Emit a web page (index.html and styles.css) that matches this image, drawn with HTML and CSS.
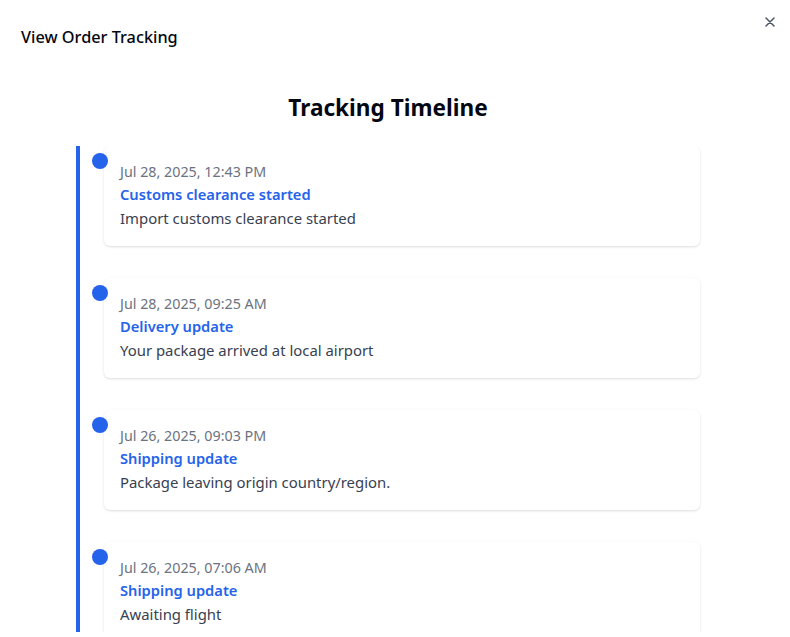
FILE: index.html
```html
<!DOCTYPE html>
<html lang="en">
<head>
  <meta charset="UTF-8">
  <title>View Order Tracking</title>
  <link rel="stylesheet" href="styles.css">
</head>
<body>
  <div class="modal">
    <div class="modal-header">
      <h3>View Order Tracking</h3>
    </div>
    <button class="close-btn" aria-label="Close">
      <svg width="10" height="10" viewBox="0 0 10 10">
        <path d="M1 1L9 9M9 1L1 9" stroke="#4b5563" stroke-width="1.5" stroke-linecap="round"/>
      </svg>
    </button>

    <h2 class="timeline-title">Tracking Timeline</h2>

    <div class="timeline-wrap">
      <div class="timeline">
        <div class="event">
          <span class="dot"></span>
          <div class="card">
            <div class="date">Jul 28, 2025, 12:43 PM</div>
            <div class="status">Customs clearance started</div>
            <div class="desc">Import customs clearance started</div>
          </div>
        </div>
        <div class="event">
          <span class="dot"></span>
          <div class="card">
            <div class="date">Jul 28, 2025, 09:25 AM</div>
            <div class="status">Delivery update</div>
            <div class="desc">Your package arrived at local airport</div>
          </div>
        </div>
        <div class="event">
          <span class="dot"></span>
          <div class="card">
            <div class="date">Jul 26, 2025, 09:03 PM</div>
            <div class="status">Shipping update</div>
            <div class="desc">Package leaving origin country/region.</div>
          </div>
        </div>
        <div class="event">
          <span class="dot"></span>
          <div class="card">
            <div class="date">Jul 26, 2025, 07:06 AM</div>
            <div class="status">Shipping update</div>
            <div class="desc">Awaiting flight</div>
          </div>
        </div>
      </div>
    </div>
  </div>
</body>
</html>
```

FILE: styles.css
```css
body {
  margin: 0;
  font-family: "Noto Sans", "Open Sans", sans-serif;
  background: #fff;
  color: #111827;
}
.modal {
  position: relative;
  padding: 23px 0 0 21px;
}
.modal-header h3 {
  margin: 0;
  font-size: 16.3px;
  font-weight: 500;
  line-height: 28px;
  color: #030712;
}
.close-btn {
  position: absolute;
  top: 15px;
  right: 13px;
  width: 14px;
  height: 14px;
  padding: 0;
  border: none;
  background: none;
  display: flex;
  align-items: center;
  justify-content: center;
  cursor: pointer;
}
.timeline-title {
  margin: 41px 35px 22px 0;
  text-align: center;
  font-size: 22.6px;
  font-weight: 700;
  line-height: 32px;
  color: #030712;
}
.timeline-wrap {
  height: 486px;
  overflow: hidden;
  margin-left: 55px;
}
.timeline {
  border-left: 4px solid #2563eb;
  padding-left: 24px;
  display: flex;
  flex-direction: column;
  gap: 32px;
  padding-bottom: 20px;
}
.event {
  position: relative;
  width: 596px;
}
.dot {
  position: absolute;
  left: -12px;
  top: 7px;
  width: 16px;
  height: 16px;
  border-radius: 50%;
  background: #2563eb;
  z-index: 1;
}
.card {
  background: #fff;
  border-radius: 6px;
  box-shadow: 0 1px 3px rgba(0, 0, 0, 0.1), 0 1px 2px rgba(0, 0, 0, 0.04);
  padding: 16px;
}
.date {
  font-size: 14.3px;
  line-height: 20px;
  color: #6b7280;
}
.status {
  font-size: 14.7px;
  font-weight: 600;
  line-height: 24px;
  color: #2563eb;
}
.desc {
  font-size: 14.9px;
  line-height: 24px;
  color: #374151;
}
```
